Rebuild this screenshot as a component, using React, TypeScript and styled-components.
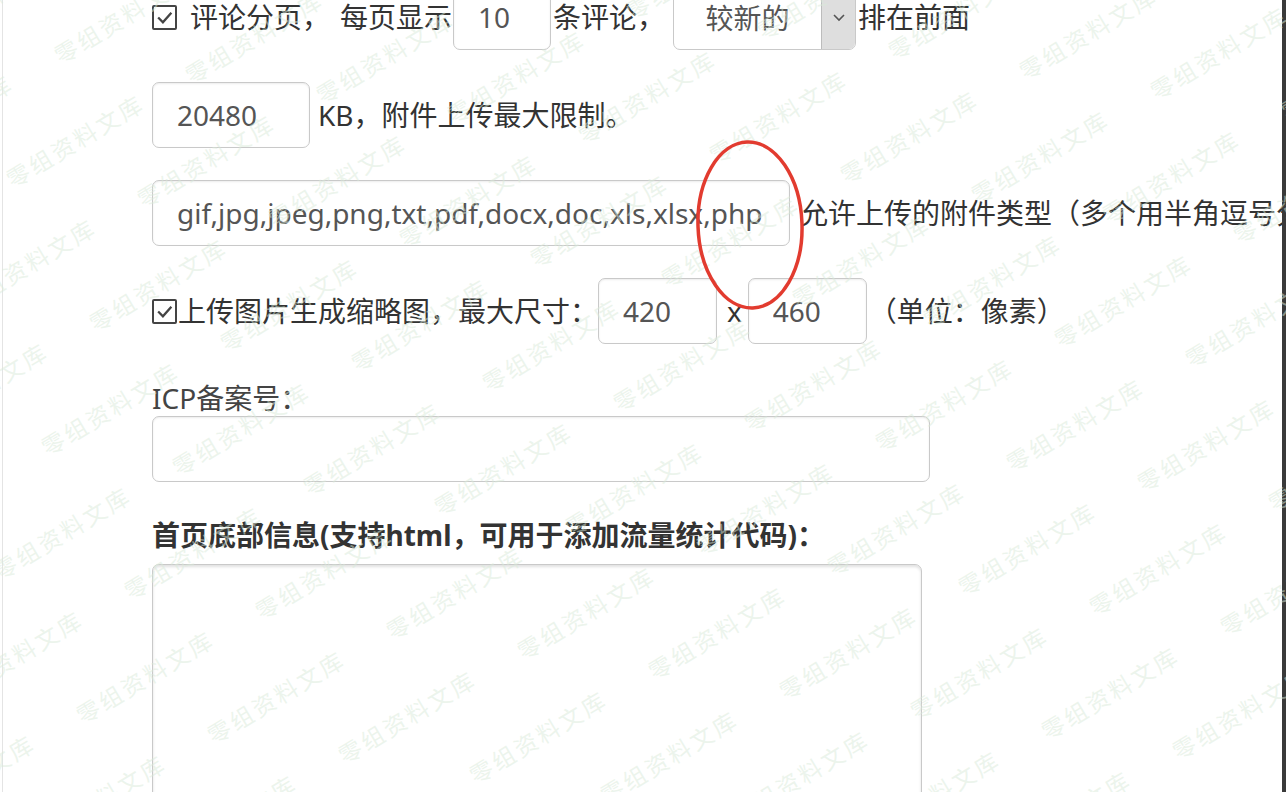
import styled, { createGlobalStyle } from "styled-components";

const GlobalStyle = createGlobalStyle`
  html, body {
    margin: 0;
    padding: 0;
    background: #fff;
  }
  body {
    font-family: "Noto Sans", "Noto Sans CJK SC", sans-serif;
    color: #333;
  }
`;

const Page = styled.div`
  position: relative;
  display: flex;
  width: 1286px;
  height: 792px;
  overflow: hidden;
  background: #fff;
`;

const Sheet = styled.div`
  flex: 1;
  margin-left: 2px;
  border-left: 1px solid #e4e4e4;
  padding-left: 149px;
  overflow: hidden;
`;

const ScrollEdge = styled.div`
  width: 4px;
  background: #3a3a3a;
`;

const Form = styled.div`
  display: flex;
  flex-direction: column;
  margin-top: -16px;
  font-size: 28px;
`;

const Row = styled.div`
  display: flex;
  align-items: center;
  height: 66px;
  margin-bottom: 32px;
  white-space: nowrap;
`;

const Text = styled.span<{ $ml?: number }>`
  margin-left: ${(p) => p.$ml ?? 0}px;
  color: #333;
  line-height: 1;
  flex-shrink: 0;
`;

const Box = styled.input<{ $w: number; $ml?: number }>`
  box-sizing: border-box;
  flex-shrink: 0;
  width: ${(p) => p.$w}px;
  height: 66px;
  margin: 0 0 0 ${(p) => p.$ml ?? 0}px;
  padding: 0 0 0 24px;
  border: 1px solid #c9c9c9;
  border-radius: 7px;
  box-shadow: inset 0 1px 2px rgba(0, 0, 0, 0.08);
  background: #fff;
  font-family: inherit;
  font-size: 28px;
  color: #555;
  outline: none;
`;

const Select = styled.div`
  box-sizing: border-box;
  display: flex;
  flex-shrink: 0;
  width: 183px;
  height: 66px;
  margin-left: 8px;
  border: 1px solid #c9c9c9;
  border-radius: 7px;
  overflow: hidden;
  background: #fff;
`;

const SelectValue = styled.span`
  flex: 1;
  display: flex;
  align-items: center;
  justify-content: center;
  color: #555;
`;

const SelectArrow = styled.span`
  width: 33px;
  display: flex;
  align-items: center;
  justify-content: center;
  background: #dedede;
  border-left: 1px solid #bcbcbc;
`;

const Check = styled.span<{ $mr?: number }>`
  box-sizing: border-box;
  display: inline-flex;
  align-items: center;
  justify-content: center;
  flex-shrink: 0;
  width: 25px;
  height: 25px;
  margin-right: ${(p) => p.$mr ?? 0}px;
  border: 2px solid #444;
  border-radius: 2px;
  background: #fff;
`;

const Label = styled.div<{ $bold?: boolean }>`
  height: 35px;
  line-height: 35px;
  font-weight: ${(p) => (p.$bold ? 700 : 400)};
  color: ${(p) => (p.$bold ? "#333" : "#444")};
  white-space: nowrap;
`;

const Field = styled.div<{ $mt: number }>`
  display: flex;
  flex-direction: column;
  margin-top: ${(p) => p.$mt}px;
`;

const TextArea = styled.textarea`
  box-sizing: border-box;
  width: 770px;
  height: 300px;
  margin-top: 11px;
  border: 1px solid #c9c9c9;
  border-radius: 7px;
  box-shadow: inset 0 2px 3px rgba(0, 0, 0, 0.12);
  resize: none;
  outline: none;
  background: #fff;
`;

const Overlay = styled.svg`
  position: absolute;
  left: 0;
  top: 0;
  pointer-events: none;
`;

function CheckBox(props: { mr?: number }) {
  return (
    <Check $mr={props.mr}>
      <svg width="19" height="19" viewBox="0 0 18 18">
        <polyline points="3,9 7.5,13.5 15.5,4.5" fill="none" stroke="#444" strokeWidth="2.2" />
      </svg>
    </Check>
  );
}

function Watermark() {
  const marks: { x: number; y: number }[] = [];
  for (let i = -14; i <= 14; i++) {
    for (let j = -6; j <= 8; j++) {
      const x = 1013 + i * 131 - j * 48;
      const y = 473 + i * 20 + j * 124;
      if (x > -200 && x < 1300 && y > -20 && y < 900) marks.push({ x, y });
    }
  }
  return (
    <Overlay width="1286" height="792">
      {marks.map((m, k) => (
        <text
          key={k}
          x={m.x}
          y={m.y}
          transform={`rotate(-31 ${m.x} ${m.y})`}
          fontFamily='"Noto Sans CJK SC", sans-serif'
          fontSize="23"
          letterSpacing="3"
          fill="#d9ead9"
          fillOpacity="0.5"
        >
          零组资料文库
        </text>
      ))}
    </Overlay>
  );
}

function RedCircle() {
  return (
    <Overlay width="1286" height="792">
      <ellipse cx="750" cy="225" rx="52" ry="83" transform="rotate(-2 750 225)" fill="none" stroke="#e23b2f" strokeWidth="3.5" />
    </Overlay>
  );
}

export default function App() {
  return (
    <>
      <GlobalStyle />
      <Page>
        <Sheet>
          <Form>
            <Row>
              <CheckBox mr={13} />
              <Text>评论分页，</Text>
              <Text $ml={10}>每页显示</Text>
              <Box $w={98} $ml={1} readOnly value="10" />
              <Text $ml={2}>条评论，</Text>
              <Select>
                <SelectValue>较新的</SelectValue>
                <SelectArrow>
                  <svg width="14" height="10" viewBox="0 0 14 10">
                    <polyline points="2,3 7,8 12,3" fill="none" stroke="#555" strokeWidth="1.6" />
                  </svg>
                </SelectArrow>
              </Select>
              <Text $ml={2}>排在前面</Text>
            </Row>
            <Row>
              <Box $w={158} readOnly value="20480" />
              <Text $ml={8}>KB，附件上传最大限制。</Text>
            </Row>
            <Row>
              <Box $w={638} readOnly value="gif,jpg,jpeg,png,txt,pdf,docx,doc,xls,xlsx,php" />
              <Text $ml={10}>允许上传的附件类型（多个用半角逗号分隔）</Text>
            </Row>
            <Row>
              <CheckBox />
              <Text $ml={1}>上传图片生成缩略图，最大尺寸：</Text>
              <Box $w={119} readOnly value="420" />
              <Text $ml={10}>x</Text>
              <Box $w={119} $ml={6} readOnly value="460" />
              <Text $ml={2}>（单位：像素）</Text>
            </Row>
            <Field $mt={5}>
              <Label>ICP备案号：</Label>
              <Box $w={778} readOnly value="" />
            </Field>
            <Field $mt={36}>
              <Label $bold>首页底部信息(支持html，可用于添加流量统计代码)：</Label>
              <TextArea readOnly />
            </Field>
          </Form>
        </Sheet>
        <ScrollEdge />
        <Watermark />
        <RedCircle />
      </Page>
    </>
  );
}
